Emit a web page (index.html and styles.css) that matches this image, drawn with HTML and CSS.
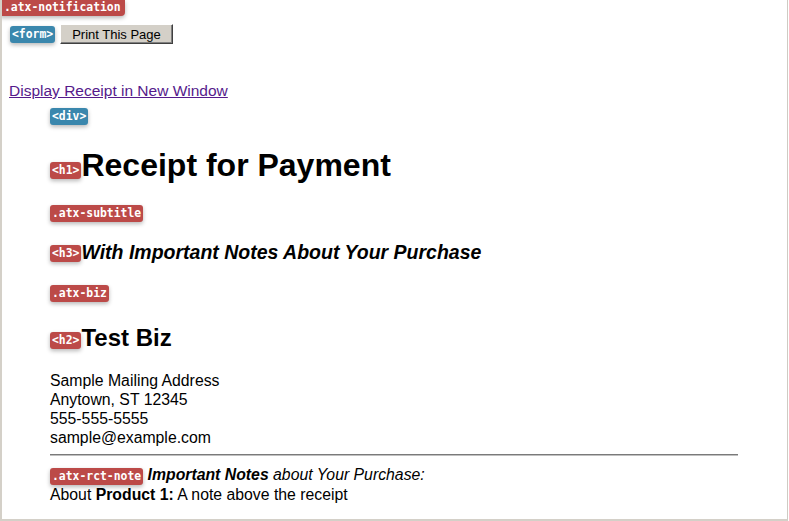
FILE: index.html
```html
<!DOCTYPE html>
<html lang="en">
<head>
<meta charset="utf-8">
<title>Receipt for Payment</title>
<link rel="stylesheet" href="styles.css">
</head>
<body>
<div class="frame">
  <span class="tag tag-red tag-notification">.atx-notification</span>
  <form class="print-row">
    <span class="tag tag-blue">&lt;form&gt;</span>
    <button type="button" class="print-btn">Print This Page</button>
  </form>
  <div class="link-row"><a href="#" class="receipt-link">Display Receipt in New Window</a></div>
  <div class="receipt">
    <div class="tag-line"><span class="tag tag-blue">&lt;div&gt;</span></div>
    <h1 class="title"><span class="tag tag-red">&lt;h1&gt;</span>Receipt for Payment</h1>
    <div class="tag-line subtitle-tag"><span class="tag tag-red">.atx-subtitle</span></div>
    <h3 class="subtitle"><span class="tag tag-red">&lt;h3&gt;</span>With Important Notes About Your Purchase</h3>
    <div class="tag-line biz-tag"><span class="tag tag-red">.atx-biz</span></div>
    <h2 class="biz"><span class="tag tag-red">&lt;h2&gt;</span>Test Biz</h2>
    <div class="address">
      <div>Sample Mailing Address</div>
      <div>Anytown, ST 12345</div>
      <div>555-555-5555</div>
      <div>sample@example.com</div>
    </div>
    <hr class="rule">
    <div class="note"><span class="tag tag-red">.atx-rct-note</span> <b><i>Important Notes</i></b> <i>about Your Purchase:</i></div>
    <div class="note-line">About <b>Product 1:</b> A note above the receipt</div>
  </div>
  <div class="splitter"></div>
</div>
</body>
</html>
```
FILE: styles.css
```css
html, body {
  margin: 0;
  padding: 0;
  background: #ffffff;
}
body {
  font-family: "Liberation Sans", Arial, sans-serif;
  color: #000;
  font-size: 15.8px;
}
.frame {
  position: relative;
  box-sizing: border-box;
  width: 788px;
  height: 521px;
  border-left: 2px solid #d4d0c8;
  border-right: 1px solid #cfcbc3;
  border-bottom: 2px solid #d4d0c8;
  overflow: hidden;
}
.tag {
  display: inline-block;
  font-family: "DejaVu Sans Mono", monospace;
  font-weight: bold;
  font-size: 11.4px;
  line-height: 13px;
  padding: 2px 2px;
  border-radius: 3px;
  color: #fff;
  box-shadow: 0 2px 4px rgba(0, 0, 0, 0.28);
  vertical-align: 2px;
  font-style: normal;
}
.tag-red { background: #bc4a48; }
.tag-blue { background: #3a87ad; }
.tag-notification {
  position: absolute;
  top: 0;
  left: -2px;
  padding: 1px 4px 2px 4px;
  border-radius: 0 0 4px 0;
}
.print-row {
  margin: 24px 0 0 0;
  padding-left: 8px;
  display: flex;
  align-items: center;
  gap: 5px;
  height: 20px;
}
.print-btn {
  font-family: "Liberation Sans", Arial, sans-serif;
  font-size: 13px;
  height: 20px;
  padding: 0 11px;
  background: #d4d0c8;
  color: #000;
  border: 1px solid;
  border-color: #fff #404040 #404040 #fff;
  box-shadow: inset -1px -1px 0 #808080;
  margin: 0;
}
.link-row {
  margin-top: 37px;
  padding-left: 7px;
  line-height: 19px;
  font-size: 15.5px;
}
.receipt-link {
  color: #551a8b;
}
.receipt {
  padding-left: 48px;
}
.tag-line {
  margin-top: 8px;
  height: 17px;
}
.tag-line .tag { vertical-align: top; }
.title {
  margin: 22px 0 0 0;
  font-size: 32px;
  line-height: 37px;
  font-weight: bold;
}
.subtitle-tag { margin-top: 21px; }
.subtitle {
  margin: 19px 0 0 0;
  font-size: 19.5px;
  line-height: 22px;
  font-weight: bold;
  font-style: italic;
}
.biz-tag { margin-top: 22px; }
.biz {
  margin: 22px 0 0 0;
  font-size: 24px;
  line-height: 28px;
  font-weight: bold;
}
.address {
  margin-top: 19px;
  line-height: 19px;
}
.rule {
  width: 688px;
  margin: 7px 0 0 0;
  border: 0;
  height: 2px;
  background: linear-gradient(#7a7a7a 50%, #c0c0c0 50%);
}
.note {
  margin-top: 9px;
  line-height: 19px;
}
.note .tag { vertical-align: 0; }
.note-line {
  line-height: 19px;
}
.splitter {
  position: absolute;
  right: -1px;
  top: 167px;
  width: 1px;
  height: 336px;
  background: repeating-linear-gradient(#bdbab3 0 1px, #ffffff 1px 2px);
}
```
